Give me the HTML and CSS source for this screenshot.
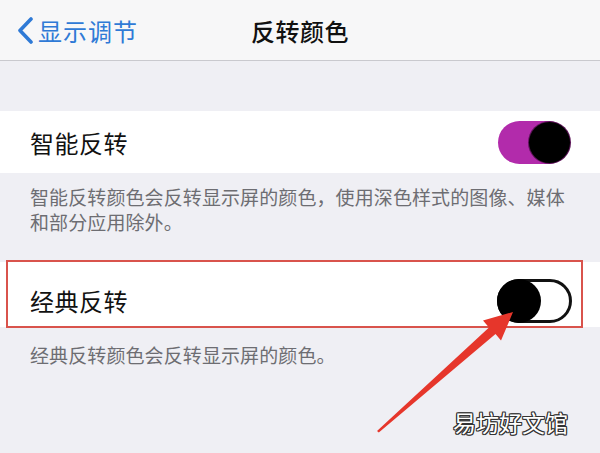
FILE: index.html
```html
<!DOCTYPE html>
<html lang="zh-CN">

<head>
    <meta charset="UTF-8">
    <meta name="viewport" content="width=device-width, initial-scale=1.0">

    <link rel="stylesheet" href="styles.css">
</head>

<body>
    <div class="screen">
        <div class="navbar">
            <a class="back">
                <svg class="chevron" width="16" height="27" viewBox="0 0 16 27">
                    <path d="M14 2 L3 13.5 L14 25" fill="none" stroke="#2f7ad6" stroke-width="3.6" stroke-linecap="round" stroke-linejoin="round"/>
                </svg>
                <span>显示调节</span>
            </a>
            <h1 class="title">反转颜色</h1>
            <span></span>
        </div>

        <div class="spacer"></div>

        <div class="row">
            <p>智能反转</p>
            <div class="switch on"><span class="knob"></span></div>
        </div>
        <p class="note first">智能反转颜色会反转显示屏的颜色，使用深色样式的图像、媒体<br>和部分应用除外。</p>

        <div class="row marked">
            <p>经典反转</p>
            <div class="switch off"><span class="knob"></span></div>
        </div>
        <p class="note">经典反转颜色会反转显示屏的颜色。</p>

        <svg class="arrow" width="600" height="453" viewBox="0 0 600 453">
            <polygon fill="#e6362b" points="377,431 489,327.5 483,320.5 513,312 501,340.5 495.5,334 378.8,432.5"/>
        </svg>

        <div class="watermark">易坊好文馆</div>
    </div>
</body>

</html>
```

FILE: styles.css
```css
body {
    margin: 0;
    background-color: #efeff4;
    font-family: 'Noto Sans CJK SC', 'Noto Sans', sans-serif;
}

.screen {
    position: relative;
    width: 600px;
    height: 453px;
    overflow: hidden;

    display: flex;
    flex-direction: column;
}

.navbar {
    height: 60px;
    flex-shrink: 0;
    border-bottom: 1px solid #c9c9ce;
    background-color: #f7f7f8;

    display: grid;
    grid-template-columns: 1fr auto 1fr;
    align-items: center;

    .back {
        display: flex;
        align-items: center;
        gap: 5px;
        padding-left: 17px;

        color: #2f7ad6;
        font-size: 24px;
        letter-spacing: 1px;
    }

    .chevron {
        margin-top: 1px;
    }

    .title {
        margin: 0;
        font-size: 24px;
        font-weight: 500;
        color: #111;
        letter-spacing: 0.5px;
    }
}

.spacer {
    height: 50px;
    flex-shrink: 0;
}

.row {
    position: relative;
    height: 62px;
    flex-shrink: 0;
    box-sizing: border-box;
    padding: 0 30px 0 30px;
    background-color: #fff;

    display: flex;
    align-items: center;
    justify-content: space-between;

    p {
        margin: 0;
        font-size: 24px;
        color: #111;
        letter-spacing: 0.5px;
    }

    &.marked {
        height: 65px;
        padding-top: 12px;
        padding-right: 28px;

        &::after {
            content: '';
            position: absolute;
            top: -2px;
            left: 6px;
            right: 17px;
            bottom: -1px;
            border: 2px solid #d9534c;
        }
    }
}

.switch {
    position: relative;
    box-sizing: border-box;
    border-radius: 30px;

    display: flex;
    align-items: center;

    .knob {
        display: block;
        border-radius: 50%;
        background-color: #000;
    }

    &.on {
        width: 72px;
        height: 43px;
        justify-content: flex-end;
        background-color: #b22bab;

        .knob {
            width: 41px;
            height: 41px;
            box-shadow: 0 0 0 1px #5c1558;
        }
    }

    &.off {
        width: 75px;
        height: 44px;
        border: 3px solid #111;
        background-color: #fff;

        .knob {
            width: 44px;
            height: 44px;
            margin-left: -3px;
        }
    }
}

.note {
    margin: 0;
    padding: 15px 30px 0;
    font-size: 19px;
    line-height: 25px;
    color: #6d6d72;
    letter-spacing: 0.1px;

    &.first {
        padding-top: 11px;
        padding-bottom: 28px;
    }
}

.arrow {
    position: absolute;
    top: 0;
    left: 0;
    pointer-events: none;
}

.watermark {
    position: absolute;
    left: 453px;
    top: 405px;

    font-size: 23px;
    color: #fff;
    text-shadow:
        1px 1px 0 #333,
        -1px -1px 0 #333,
        1px -1px 0 #333,
        -1px 1px 0 #333,
        0 1px 0 #333,
        0 -1px 0 #333,
        1px 0 0 #333,
        -1px 0 0 #333;
}
```
